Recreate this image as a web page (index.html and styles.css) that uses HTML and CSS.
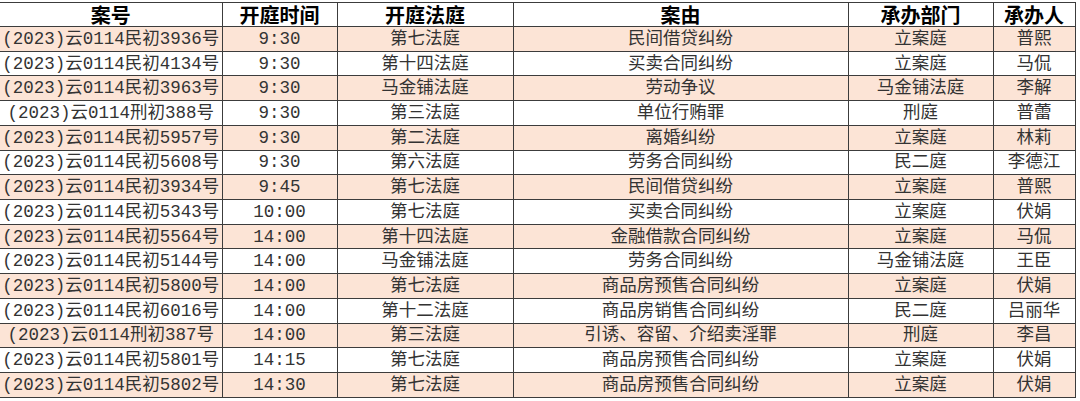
FILE: index.html
```html
<!DOCTYPE html>
<html lang="zh">
<head>
<meta charset="utf-8">
<title>开庭公告</title>
<link rel="stylesheet" href="styles.css">
</head>
<body>
<table class="sheet">
  <colgroup>
    <col class="c-no"><col class="c-time"><col class="c-court"><col class="c-cause"><col class="c-dept"><col class="c-judge">
  </colgroup>
  <thead>
    <tr><th>案号</th><th>开庭时间</th><th>开庭法庭</th><th>案由</th><th>承办部门</th><th>承办人</th></tr>
  </thead>
  <tbody>
    <tr class="hl"><td>(2023)云0114民初3936号</td><td>9:30</td><td>第七法庭</td><td>民间借贷纠纷</td><td>立案庭</td><td>普熙</td></tr>
    <tr><td>(2023)云0114民初4134号</td><td>9:30</td><td>第十四法庭</td><td>买卖合同纠纷</td><td>立案庭</td><td>马侃</td></tr>
    <tr class="hl"><td>(2023)云0114民初3963号</td><td>9:30</td><td>马金铺法庭</td><td>劳动争议</td><td>马金铺法庭</td><td>李解</td></tr>
    <tr><td>(2023)云0114刑初388号</td><td>9:30</td><td>第三法庭</td><td>单位行贿罪</td><td>刑庭</td><td>普蕾</td></tr>
    <tr class="hl"><td>(2023)云0114民初5957号</td><td>9:30</td><td>第二法庭</td><td>离婚纠纷</td><td>立案庭</td><td>林莉</td></tr>
    <tr><td>(2023)云0114民初5608号</td><td>9:30</td><td>第六法庭</td><td>劳务合同纠纷</td><td>民二庭</td><td>李德江</td></tr>
    <tr class="hl"><td>(2023)云0114民初3934号</td><td>9:45</td><td>第七法庭</td><td>民间借贷纠纷</td><td>立案庭</td><td>普熙</td></tr>
    <tr><td>(2023)云0114民初5343号</td><td>10:00</td><td>第七法庭</td><td>买卖合同纠纷</td><td>立案庭</td><td>伏娟</td></tr>
    <tr class="hl"><td>(2023)云0114民初5564号</td><td>14:00</td><td>第十四法庭</td><td>金融借款合同纠纷</td><td>立案庭</td><td>马侃</td></tr>
    <tr><td>(2023)云0114民初5144号</td><td>14:00</td><td>马金铺法庭</td><td>劳务合同纠纷</td><td>马金铺法庭</td><td>王臣</td></tr>
    <tr class="hl"><td>(2023)云0114民初5800号</td><td>14:00</td><td>第七法庭</td><td>商品房预售合同纠纷</td><td>立案庭</td><td>伏娟</td></tr>
    <tr><td>(2023)云0114民初6016号</td><td>14:00</td><td>第十二法庭</td><td>商品房销售合同纠纷</td><td>民二庭</td><td>吕丽华</td></tr>
    <tr class="hl"><td>(2023)云0114刑初387号</td><td>14:00</td><td>第三法庭</td><td>引诱、容留、介绍卖淫罪</td><td>刑庭</td><td>李昌</td></tr>
    <tr><td>(2023)云0114民初5801号</td><td>14:15</td><td>第七法庭</td><td>商品房预售合同纠纷</td><td>立案庭</td><td>伏娟</td></tr>
    <tr class="hl"><td>(2023)云0114民初5802号</td><td>14:30</td><td>第七法庭</td><td>商品房预售合同纠纷</td><td>立案庭</td><td>伏娟</td></tr>
  </tbody>
</table>
</body>
</html>
```
FILE: styles.css
```css
html, body {
  margin: 0;
  padding: 0;
  background: #ffffff;
}

body {
  padding-top: 2px;
}

.sheet {
  width: 1075px;
  table-layout: fixed;
  border-collapse: collapse;
  font-family: "Liberation Mono", "Noto Sans CJK SC", monospace;
  font-size: 17.5px;
  color: #333333;
}

.c-no { width: 222px; }
.c-time { width: 115px; }
.c-court { width: 176px; }
.c-cause { width: 335px; }
.c-dept { width: 145px; }
.c-judge { width: 82px; }

.sheet th,
.sheet td {
  border: 1px solid #3c3c3c;
  padding: 0;
  text-align: center;
  vertical-align: middle;
  white-space: nowrap;
  line-height: 22px;
}

.sheet th:first-child,
.sheet td:first-child {
  border-left: none;
}

.sheet thead tr {
  height: 24px;
}

.sheet th {
  font-family: "Noto Sans CJK SC", sans-serif;
  font-size: 20px;
  font-weight: bold;
  color: #000000;
  line-height: 22px;
}

.sheet tbody tr {
  height: 24.73px;
}

.sheet tr.hl td {
  background: #fce4d6;
}
```
